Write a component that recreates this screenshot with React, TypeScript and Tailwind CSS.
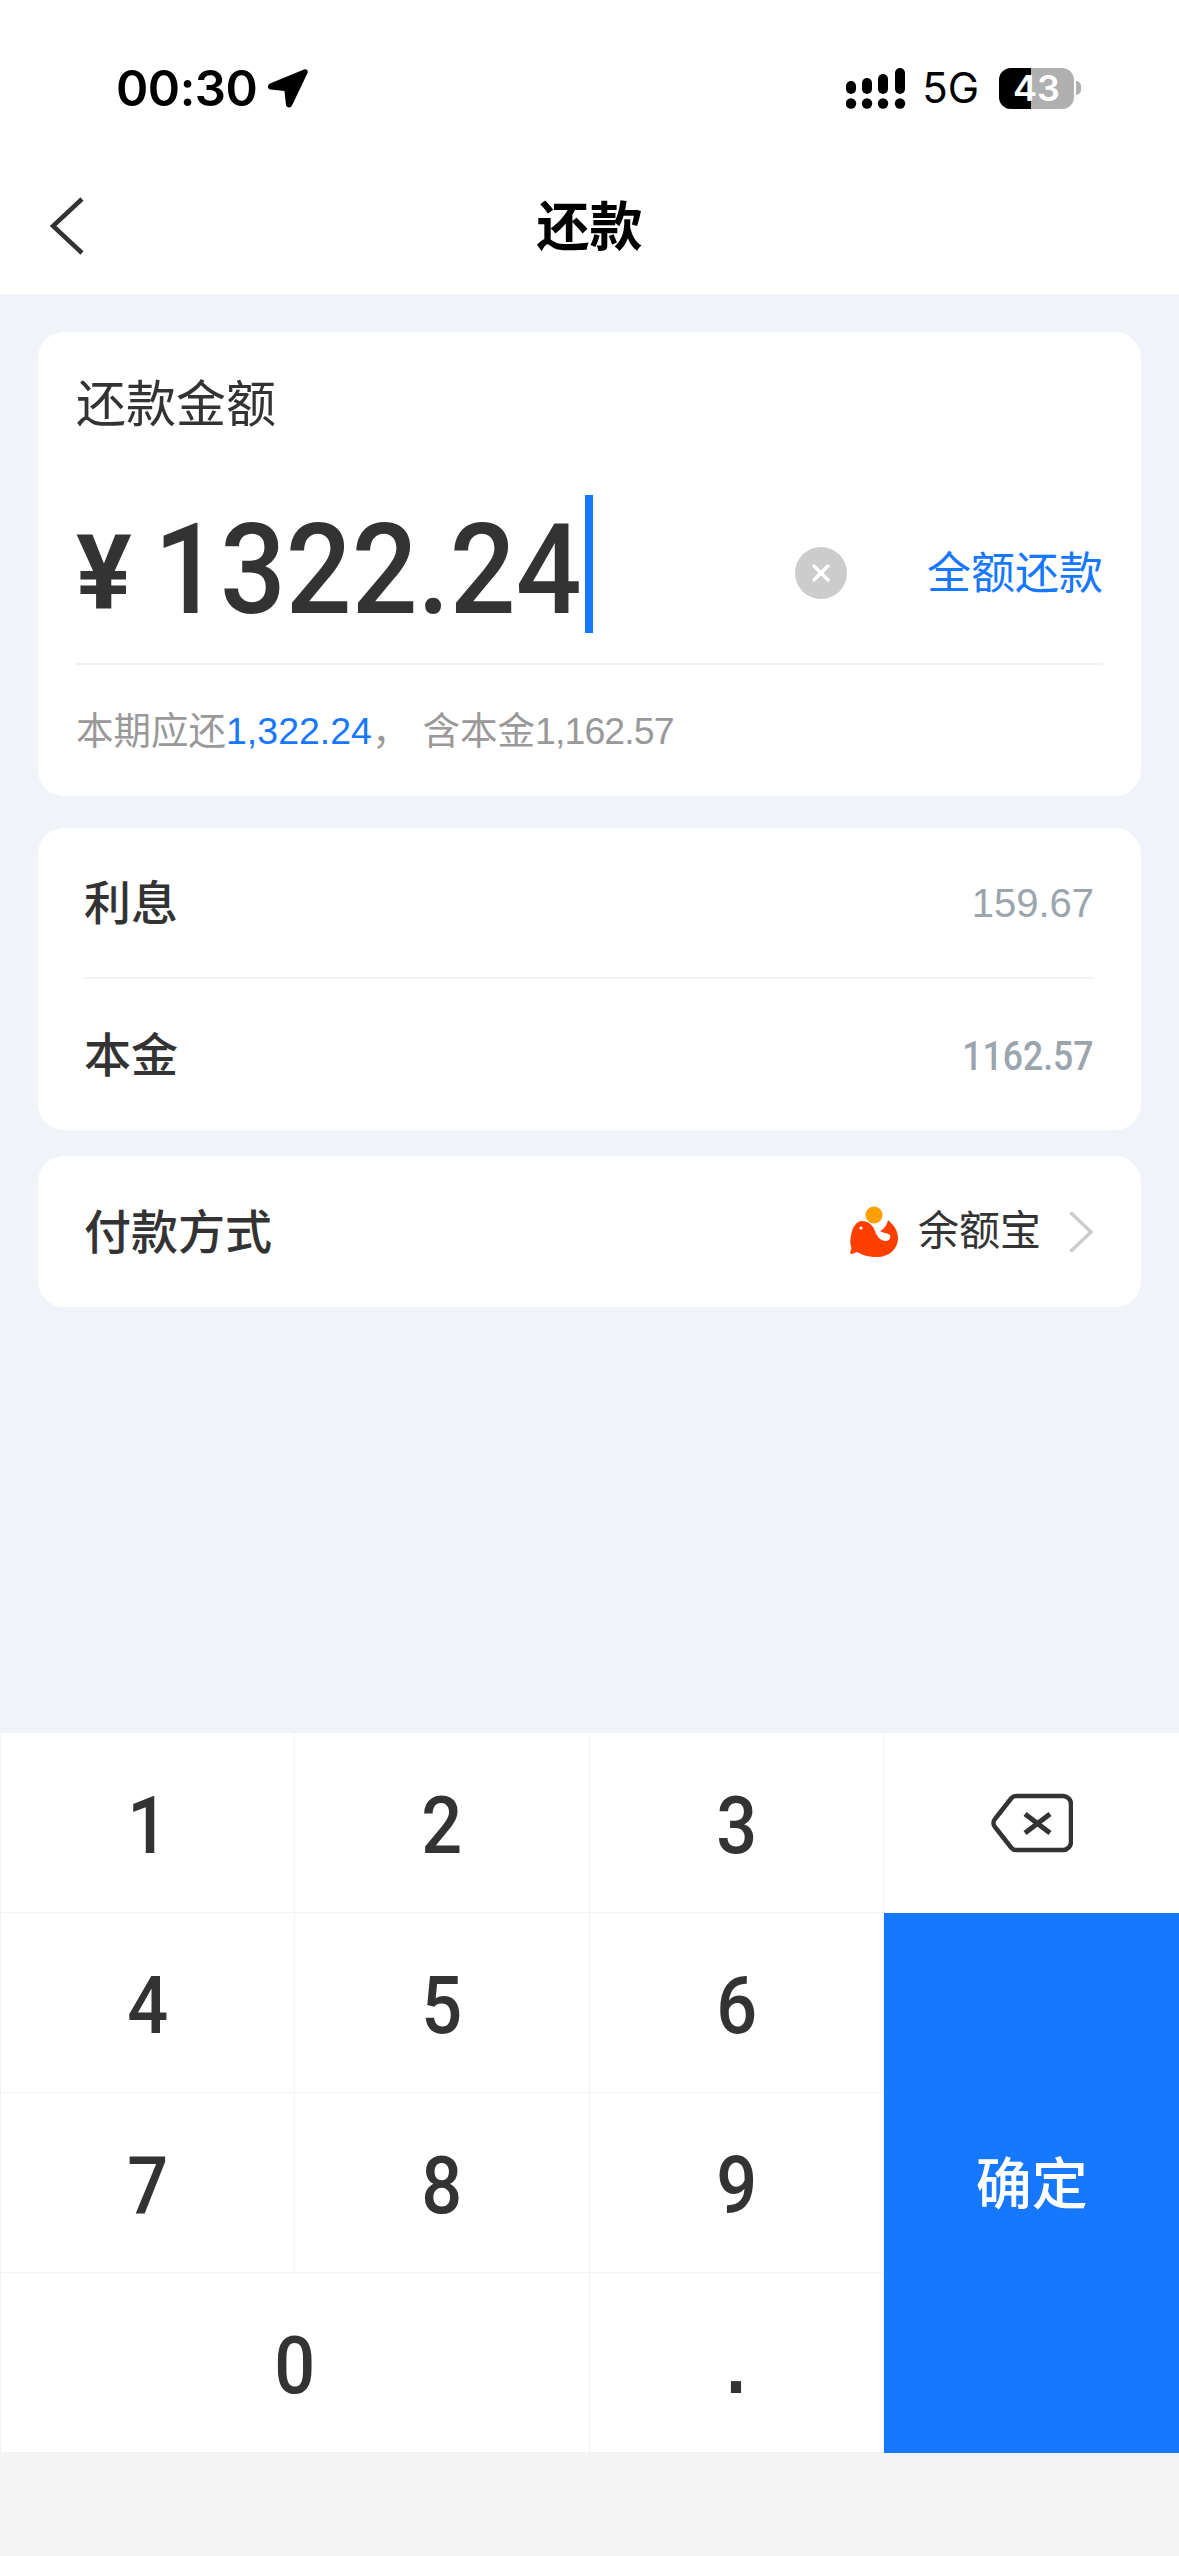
const cjk = `font-['Liberation_Sans','Noto_Sans_CJK_SC',sans-serif]`;

// Digits on the keypad and in the amount field are a narrow DIN-like cut
function Digit({ value, className = `font-['Roboto',sans-serif] font-medium` }: { value: string; className?: string }) {
  return (
    <span className={`inline-block scale-x-[.9] text-[80px] leading-none text-[#333333] ${className}`}>
      {value}
    </span>
  );
}

function Key({ value, className = '', digitClass }: { value: string; className?: string; digitClass?: string }) {
  return (
    <div className={`flex items-center justify-center border-r border-b border-[#f3f3f3] pt-[7px] ${className}`}>
      <Digit value={value} className={digitClass} />
    </div>
  );
}

function SignalIcon() {
  return (
    <svg width="60" height="41" viewBox="0 0 60 41" fill="#000">
      <rect x="0" y="13" width="10" height="13" rx="5" />
      <rect x="16" y="10" width="10" height="16" rx="5" />
      <rect x="32" y="6" width="10" height="20" rx="5" />
      <rect x="49" y="0" width="10" height="26" rx="5" />
      <circle cx="5" cy="35.5" r="5.2" />
      <circle cx="21" cy="35.5" r="5.2" />
      <circle cx="37" cy="35.5" r="5.2" />
      <circle cx="54" cy="35.5" r="5.2" />
    </svg>
  );
}

function Battery() {
  return (
    <div className="flex items-center">
      <div className="relative flex h-[41px] w-[75px] items-center justify-center overflow-hidden rounded-[12px] bg-[#b0b0b0]">
        <div className="absolute inset-y-0 left-0 w-[32px] bg-black" />
        <span className="relative font-['Inter',sans-serif] text-[36px] leading-none font-semibold text-white">43</span>
      </div>
      <div className="ml-[2px] h-[14px] w-[5px] rounded-r-full bg-[#b0b0b0]" />
    </div>
  );
}

function YebaoIcon() {
  return (
    <svg width="50" height="52" viewBox="0 0 50 52">
      <circle cx="25" cy="9" r="8.6" fill="#ffa000" />
      <path
        fill="#ff3f00"
        d="M39 14C45 19 49 25 49 32C49 43 40 51 28 51C20 51 13 49 8 46L3 48C1 48 1 47 1.500 45L2.500 42C1 38 1 34 2 30C3 21 8 15 13 15C19 15 24 19 26 25C28 31 32 35 37 35C40 35 42 32 41 29C38 27 34 27 31 25C35 23 38 19 39 14Z"
      />
      <circle cx="12" cy="22" r="1.6" fill="#fff" />
    </svg>
  );
}

export default function App() {
  return (
    <div className={`flex h-[2556px] w-[1179px] flex-col bg-[#f0f3f8] ${cjk}`}>
      {/* Status bar + nav */}
      <div className="bg-white">
        <div className="flex h-[160px] items-center justify-between pt-4 pr-[98px] pl-[116px]">
          <div className="flex items-center gap-[11px]">
            <span className="font-['Inter',sans-serif] text-[49px] leading-none font-semibold tracking-[-0.5px] text-black">00:30</span>
            <svg width="40" height="39" viewBox="0 0 40 39" fill="#000">
              <path d="M36 0.5c2.5-1 4.5 1 3.5 3.5L24 36.5c-1.5 3-5.5 2.5-6-0.5l-1.5-14-14-1.500c-3-0.5-3.500-4.500-0.5-6z" />
            </svg>
          </div>
          <div className="flex items-center">
            <SignalIcon />
            <span className="mr-[20px] ml-[16px] font-['Inter',sans-serif] text-[42px] leading-none font-normal text-black">5G</span>
            <Battery />
          </div>
        </div>
        <div className="grid h-[134px] grid-cols-[1fr_auto_1fr] items-center pl-[50px]">
          <svg className="mb-[3px]" width="34" height="58" viewBox="0 0 34 58" fill="none" stroke="#333333" strokeWidth="4.500">
            <path d="M32 2L3 29L32 56" />
          </svg>
          <span className="-ml-[50px] text-[53px] leading-none font-bold text-black">还款</span>
        </div>
      </div>

      {/* Cards */}
      <div className="flex flex-1 flex-col px-[38px] pt-[38px]">
        <div className="flex h-[464px] flex-col rounded-[26px] bg-white px-[38px]">
          <div className="pt-[48px] text-[50px] leading-none text-[#333333]">还款金额</div>
          <div className="mt-[65px] flex h-[138px] items-center pt-[18px]">
            <span className="font-['Roboto',sans-serif] text-[104px] leading-none font-bold text-[#333333]">¥</span>
            <div className="mb-[6px] ml-[22px] w-[431px]">
              <span className="inline-block origin-left scale-x-[.92] font-['Roboto',sans-serif] text-[126px] leading-none font-medium text-[#333333]">
                1322.24
              </span>
            </div>
            {/* caret */}
            <div className="-mt-[18px] h-[138px] w-[8px] bg-[#1677ff]" />
            <div className="ml-auto flex items-center">
              <div className="flex h-[52px] w-[52px] items-center justify-center rounded-full bg-[#cccccc]">
                <svg width="20" height="20" viewBox="0 0 20 20" stroke="#fff" strokeWidth="3.5" strokeLinecap="round">
                  <path d="M3 3l14 14M17 3L3 17" />
                </svg>
              </div>
              <span className="ml-[80px] pt-[2px] text-[44px] leading-none text-[#1677ff]">全额还款</span>
            </div>
          </div>
          <div className="mt-[30px] h-[2px] bg-[#f0f1f3]" />
          <div className="flex items-center pt-[48px] text-[37.5px] leading-none text-[#999999]">
            <span>本期应还</span>
            <span className="text-[#1677ff]">1,322.24</span>
            <span>，</span>
            <span className="ml-[13px]">
              含本金<span className="tracking-[-0.9px]">1,162.57</span>
            </span>
          </div>
        </div>

        <div className="mt-[32px] flex h-[302px] flex-col rounded-[26px] bg-white pr-[47px] pl-[46px]">
          <div className="flex h-[151px] items-center justify-between border-b-2 border-[#f2f3f5]">
            <span className="pt-[2px] text-[47px] leading-none font-medium text-[#333333]">利息</span>
            <span className="text-[40px] leading-none text-[#9aa5ad]">159.67</span>
          </div>
          <div className="flex flex-1 items-center justify-between">
            <span className="pt-[2px] text-[47px] leading-none font-medium text-[#333333]">本金</span>
            <span className="inline-block origin-right scale-x-[.89] pt-[4px] font-['Roboto',sans-serif] text-[40px] leading-none font-medium text-[#9aa5ad]">
              1162.57
            </span>
          </div>
        </div>

        <div className="mt-[26px] flex h-[151px] items-center rounded-[26px] bg-white pr-[48px] pl-[46px]">
          <span className="pt-[2px] text-[47px] leading-none font-medium text-[#333333]">付款方式</span>
          <div className="ml-auto flex items-center">
            <YebaoIcon />
            <span className="ml-[19px] text-[41px] leading-none text-[#333333]">余额宝</span>
            <svg className="ml-[28px]" width="24" height="42" viewBox="0 0 24 42" fill="none" stroke="#cccccc" strokeWidth="3.5">
              <path d="M1.500 1.500L22 21L1.500 40.500" />
            </svg>
          </div>
        </div>
      </div>

      {/* Numeric keypad */}
      <div className="grid h-[720px] grid-cols-4 grid-rows-4 bg-white">
        <Key value="1" className="border-l" />
        <Key value="2" />
        <Key value="3" />
        <div className="flex items-center justify-center">
          <svg width="82" height="60" viewBox="0 0 82 60" fill="none" stroke="#333333" strokeWidth="4.500" strokeLinejoin="round">
            <path d="M25 3H72a8 8 0 0 1 8 8V49a8 8 0 0 1-8 8H25a6 6 0 0 1-4.500-2L4 34a6 6 0 0 1 0-8L20.500 5a6 6 0 0 1 4.500-2z" />
            <path d="M34 21l25 19M59 21L34 40" strokeWidth="5" />
          </svg>
        </div>
        <Key value="4" className="border-l" />
        <Key value="5" />
        <Key value="6" />
        <div className="row-span-3 flex items-center justify-center bg-[#1677ff] pt-[4px] text-[56px] leading-none font-medium text-white">
          确定
        </div>
        <Key value="7" className="border-l" />
        <Key value="8" />
        <Key value="9" />
        <Key value="0" className="col-span-2 border-l" />
        <Key value="." digitClass="font-['Liberation_Sans',sans-serif] font-bold" />
      </div>
      <div className="h-[103px] bg-[#f4f4f5]" />
    </div>
  );
}
